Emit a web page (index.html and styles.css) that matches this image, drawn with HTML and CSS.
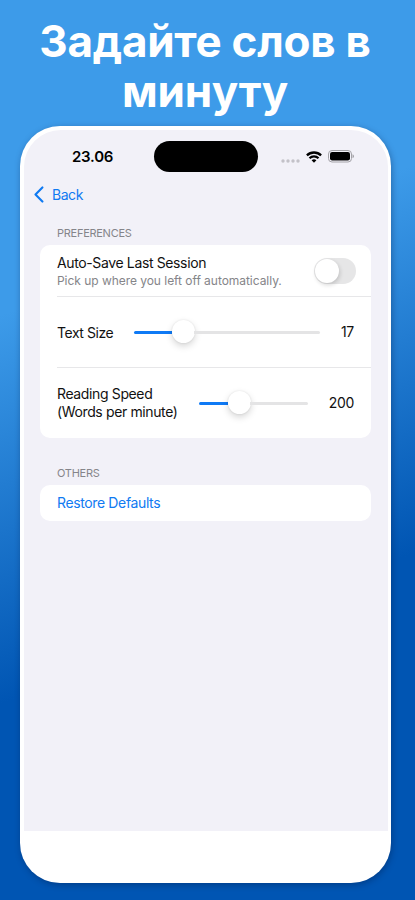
FILE: index.html
```html
<!DOCTYPE html>
<html lang="ru">
<head>
<meta charset="utf-8">
<title>Задайте слов в минуту</title>
<link rel="stylesheet" href="styles.css">
</head>
<body>
<h1 class="headline">Задайте слов в<br>минуту</h1>
<main class="phone">
  <div class="screen">
    <header class="status">
      <span class="time">23.06</span>
      <span class="island"></span>
      <span class="indicators">
        <svg class="dots" width="19" height="4" viewBox="0 0 19 4"><g fill="#c3c2c8"><circle cx="2" cy="2" r="1.7"/><circle cx="7" cy="2" r="1.7"/><circle cx="12" cy="2" r="1.7"/><circle cx="17" cy="2" r="1.7"/></g></svg>
        <svg class="wifi" width="16" height="12" viewBox="0 0 16 12"><g fill="none" stroke="#000" stroke-width="2.3"><path d="M.9 4.4a10.2 10.2 0 0 1 14.2 0"/><path d="M3.5 7.2a6.4 6.4 0 0 1 9 0"/></g><path d="M8 11.7 5.6 9.3a3.5 3.5 0 0 1 4.8 0z"/></svg>
        <svg class="battery" width="27" height="13" viewBox="0 0 27 13"><rect x=".5" y=".5" width="23" height="11.5" rx="3.5" fill="none" stroke="#a4a3a8"/><rect x="2" y="2" width="20" height="8.5" rx="2.2"/><path d="M24.5 4.3q1.5.6 1.5 2t-1.5 2z" fill="#a4a3a8"/></svg>
      </span>
    </header>
    <nav class="nav">
      <svg width="10" height="17" viewBox="0 0 10 17"><path d="M8.4 1.4 1.5 8.5l6.9 7.1" fill="none" stroke="#0f7af2" stroke-width="2.1" stroke-linecap="round" stroke-linejoin="round"/></svg>
      <span class="back">Back</span>
    </nav>
    <h2 class="label">PREFERENCES</h2>
    <section class="card">
      <div class="row row-save">
        <div class="copy">
          <div class="title">Auto-Save Last Session</div>
          <div class="hint">Pick up where you left off automatically.</div>
        </div>
        <span class="toggle"><span class="toggle-knob"></span></span>
      </div>
      <div class="row row-slider">
        <div class="title title-size">Text Size</div>
        <div class="slider slider-size"><span class="fill"></span><span class="knob"></span><span class="rest"></span></div>
        <span class="value">17</span>
      </div>
      <div class="row row-slider">
        <div class="title">Reading Speed<br>(Words per minute)</div>
        <div class="slider slider-speed"><span class="fill"></span><span class="knob"></span><span class="rest"></span></div>
        <span class="value value-wide">200</span>
      </div>
    </section>
    <h2 class="label label-others">OTHERS</h2>
    <section class="card card-restore"><span class="restore">Restore Defaults</span></section>
  </div>
</main>
</body>
</html>
```
FILE: styles.css
```css
* { box-sizing: border-box; }
body {
  margin: 0;
  width: 415px;
  height: 900px;
  overflow: hidden;
  background: linear-gradient(160deg, #3d9be9 30%, #0055b3 67%);
  font-family: Inter, "Liberation Sans", sans-serif;
  color: #111;
}
.headline {
  height: 126px;
  margin: 0;
  padding: 16px 5px 0 0;
  color: #fff;
  font-size: 44px;
  line-height: 50px;
  font-weight: 700;
  letter-spacing: -.25px;
  text-align: center;
  white-space: nowrap;
}
.phone {
  width: 371px;
  height: 757px;
  margin-left: 20px;
  padding: 4px 3px 4px 4px;
  border-radius: 40px;
  background: #fff;
  box-shadow: 1px 2px 6px rgba(0, 20, 60, .35);
}
.screen {
  height: 701px;
  border-radius: 37px 37px 0 0;
  background: #f2f1f8;
}
.status {
  display: flex;
  align-items: center;
  height: 53px;
  padding-left: 48px;
}
.time { width: 81.5px; font-size: 15px; font-weight: 600; letter-spacing: -.25px; color: #000; }
.island { width: 104px; height: 31px; border-radius: 16px; background: #000; }
.indicators { display: flex; align-items: center; margin-left: 23.5px; }
.dots { margin-top: 8px; }
.wifi { margin-left: 6px; }
.battery { margin-left: 6px; }
.nav {
  display: flex;
  align-items: center;
  height: 22px;
  padding-left: 10px;
  gap: 8px;
  color: #0f7af2;
  font-size: 14px;
  letter-spacing: -.45px;
}
.label {
  height: 40px;
  margin: 0;
  padding: 22px 0 0 33px;
  color: #85858a;
  font-size: 11px;
  line-height: 13px;
  font-weight: 400;
  letter-spacing: -.27px;
}
.card {
  width: 331px;
  height: 193px;
  margin-left: 16px;
  border-radius: 10px;
  background: #fff;
}
.row { display: flex; align-items: center; margin-left: 17px; padding-right: 17px; }
.row + .row { border-top: 1px solid #e7e7e9; }
.row-save { height: 51px; padding-right: 15px; justify-content: space-between; }
.row-slider { height: 71px; }
.copy { padding-top: 2px; }
.title { font-size: 14px; line-height: 18px; letter-spacing: -.37px; white-space: nowrap; }
.title-size { padding-top: 1px; letter-spacing: -.45px; }
.hint { color: #858589; font-size: 12px; line-height: 17px; letter-spacing: -.04px; white-space: nowrap; }
.toggle { width: 42px; height: 26px; padding: 1px; border-radius: 13px; background: #e6e6e7; }
.toggle-knob {
  display: block;
  width: 24px;
  height: 24px;
  border-radius: 50%;
  background: #fff;
  box-shadow: 1px 2px 4px rgba(0, 0, 0, .16);
}
.slider { display: flex; align-items: center; margin-left: auto; }
.slider-size { width: 186px; }
.slider-speed { width: 109px; }
.fill { width: 38px; height: 3px; border-radius: 2px 0 0 2px; background: #0f7af5; }
.slider-speed .fill { width: 29px; }
.rest { flex: 1; height: 3px; border-radius: 0 2px 2px 0; background: #e4e4e5; }
.knob {
  width: 23px;
  height: 23px;
  margin: 0 -.5px 2px;
  border-radius: 50%;
  background: #fff;
  box-shadow: 0 3px 7px rgba(0, 0, 0, .17), 0 0 2px rgba(0, 0, 0, .1);
}
.value { width: 34px; padding-bottom: 1px; font-size: 14px; letter-spacing: -.3px; text-align: right; }
.value-wide { width: 46px; }
.label-others { height: 47px; padding-top: 29px; }
.card-restore { display: flex; align-items: center; height: 36px; padding: 0 0 1px 17px; }
.restore { color: #0f7af2; font-size: 14px; letter-spacing: -.37px; }
```
